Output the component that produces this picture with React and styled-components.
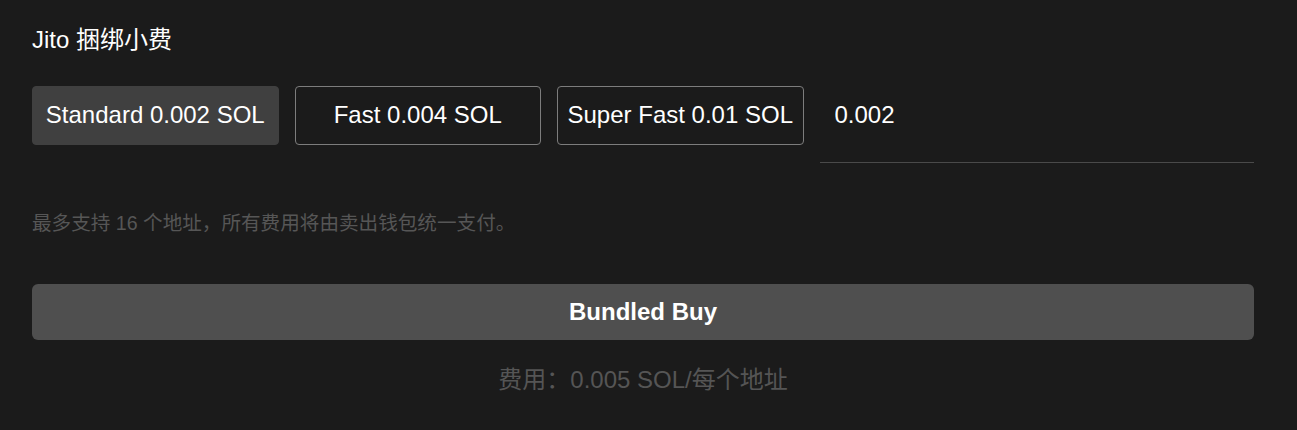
import React, { useState } from 'react';
import styled, { createGlobalStyle } from 'styled-components';

const GlobalStyle = createGlobalStyle`
  html, body {
    margin: 0;
    padding: 0;
    background: #1b1b1b;
  }
  body {
    font-family: "Liberation Sans", Arial, "Noto Sans CJK SC", sans-serif;
  }
`;

const Page = styled.div`
  width: 1297px;
  height: 430px;
  box-sizing: border-box;
  padding: 24px 43px 0 32px;
  background: #1b1b1b;
  color: #fff;
`;

const Title = styled.div`
  font-size: 24px;
  line-height: 32px;
  color: #fff;
`;

const FeeRow = styled.div`
  display: flex;
  align-items: flex-start;
  gap: 16px;
  margin-top: 30px;
`;

const FeeButton = styled.button`
  width: 246.5px;
  height: 58.5px;
  flex: none;
  box-sizing: border-box;
  padding: 0;
  border-radius: 4px;
  font-family: inherit;
  font-size: 24px;
  color: #fff;
  cursor: pointer;
  white-space: nowrap;
  background-color: ${props => props.active ? '#404040' : 'transparent'};
  border: 1px solid ${props => props.active ? '#404040' : '#7d7d7d'};
`;

const InputWrap = styled.div`
  flex: 1;
  height: 77px;
  box-sizing: border-box;
  border-bottom: 1px solid #4a4a4a;
`;

const FeeInput = styled.input`
  width: 100%;
  height: 58.5px;
  box-sizing: border-box;
  padding: 0 15px;
  background: transparent;
  border: 0;
  color: #fff;
  font-family: inherit;
  font-size: 24px;

  &:focus {
    outline: none;
  }
`;

const Hint = styled.p`
  margin: 47px 0 0;
  font-size: 19.6px;
  line-height: 26px;
  color: #565656;
`;

const BuyButton = styled.button`
  display: block;
  width: 100%;
  height: 56px;
  margin-top: 48px;
  border: 0;
  border-radius: 6px;
  background-color: #4f4f4f;
  color: #fff;
  font-family: inherit;
  font-size: 24px;
  font-weight: 700;
  cursor: pointer;
`;

const Cost = styled.div`
  margin-top: 24px;
  text-align: center;
  font-size: 24px;
  line-height: 32px;
  color: #555;
`;

const tips = [
  { label: 'Standard 0.002 SOL', value: '0.002' },
  { label: 'Fast 0.004 SOL', value: '0.004' },
  { label: 'Super Fast 0.01 SOL', value: '0.01' },
];

export default function App() {
  const [tip, setTip] = useState('0.002');

  return (
    <Page>
      <GlobalStyle />
      <Title>Jito 捆绑小费</Title>
      <FeeRow>
        {tips.map(t => (
          <FeeButton key={t.label} active={t.value === tip} onClick={() => setTip(t.value)}>
            {t.label}
          </FeeButton>
        ))}
        <InputWrap>
          <FeeInput value={tip} onChange={e => setTip(e.target.value)} />
        </InputWrap>
      </FeeRow>
      <Hint>最多支持 16 个地址，所有费用将由卖出钱包统一支付。</Hint>
      <BuyButton>Bundled Buy</BuyButton>
      <Cost>费用：0.005 SOL/每个地址</Cost>
    </Page>
  );
}
